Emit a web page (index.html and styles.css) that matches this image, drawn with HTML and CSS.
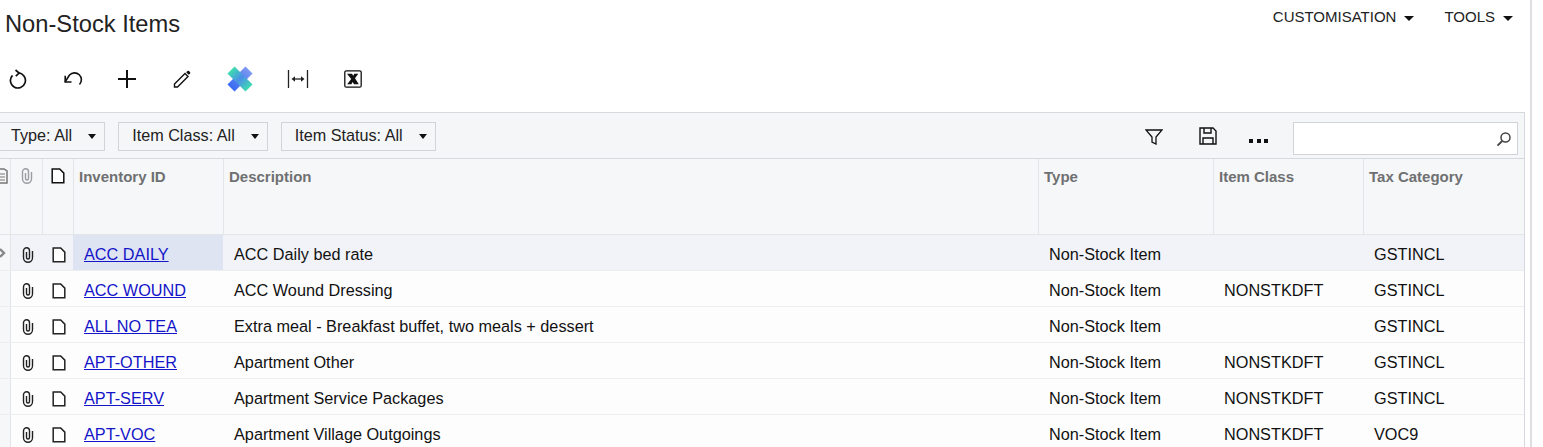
FILE: index.html
```html
<!DOCTYPE html>
<html lang="en">
<head>
    <meta charset="UTF-8">
    <meta name="viewport" content="width=device-width, initial-scale=1.0">
    <title>Non-Stock Items</title>
    <link rel="stylesheet" href="styles.css">
</head>
<body>
    <svg class="defs" width="0" height="0">
        <symbol id="clip" viewBox="0 0 12 16">
            <path d="M10.500 4V10.800a4.500 4.500 0 0 1-9 0V3.800a3 3 0 0 1 6 0V10.500a1.500 1.500 0 0 1-3 0V5" fill="none" stroke="currentColor" stroke-width="1.400"/>
        </symbol>
        <symbol id="doc" viewBox="0 0 14 16">
            <path d="M1.200 1h7.500l4.100 4.100V14.800H1.200z" fill="#fff" stroke="currentColor" stroke-width="1.500"/>
        </symbol>
    </svg>
    <div class="page">
        <div class="top">
            <h1>Non-Stock Items</h1>
            <div class="top-menu">
                <span class="menu-item">CUSTOMISATION<i class="caret"></i></span>
                <span class="menu-item">TOOLS<i class="caret"></i></span>
            </div>
        </div>
        <div class="actions">
            <button class="icon-btn"><svg width="20" height="20" viewBox="0 0 20 20"><path d="M10.500 4a7.500 7.500 0 1 1-6 2.300" fill="none" stroke="#111" stroke-width="1.700"/><path d="M7.500 1l3.600 3-3.300 3.200" fill="none" stroke="#111" stroke-width="1.700"/></svg></button>
            <button class="icon-btn"><svg width="20" height="20" viewBox="0 0 20 20"><path d="M2 13l4.500-7a6.800 6.800 0 0 1 10 9.500" fill="none" stroke="#111" stroke-width="1.600"/><path d="M2.200 6.800V13H8.500" fill="none" stroke="#111" stroke-width="1.600"/></svg></button>
            <button class="icon-btn"><svg width="20" height="20" viewBox="0 0 20 20"><path d="M10 1v18M1 10h18" stroke="#111" stroke-width="2"/></svg></button>
            <button class="icon-btn"><svg width="20" height="20" viewBox="0 0 20 20"><path d="M2.500 15L13 4.500l3 3L5.500 18h-3z" fill="#fff" stroke="#111" stroke-width="1.400"/><path d="M14.200 3.300l1.300-1.300a1 1 0 0 1 1.400 0l1.100 1.100a1 1 0 0 1 0 1.400l-1.300 1.300z" fill="#111"/></svg></button>
            <button class="icon-btn logo-btn"><svg width="26" height="26" viewBox="0 0 26 26"><defs><linearGradient id="bandA" gradientUnits="userSpaceOnUse" x1="4" y1="4" x2="22" y2="22"><stop offset="0" stop-color="#3ddfae"/><stop offset=".5" stop-color="#4a8fe8"/><stop offset="1" stop-color="#3fdcb0"/></linearGradient><linearGradient id="bandB" gradientUnits="userSpaceOnUse" x1="4" y1="22" x2="22" y2="4"><stop offset="0" stop-color="#3a6af2"/><stop offset="1" stop-color="#7c98f0"/></linearGradient></defs><path d="M22 4L4 22" stroke="url(#bandB)" stroke-width="10"/><path d="M4 4l18 18" stroke="url(#bandA)" stroke-width="10"/></svg></button>
            <button class="icon-btn"><svg width="22" height="20" viewBox="0 0 22 20"><path d="M1.500 1v18M20.500 1v18" stroke="#222" stroke-width="1.300"/><path d="M6 10h10" stroke="#222" stroke-width="1.300"/><path d="M4.500 10L8 7.300v5.400zM17.500 10L14 7.300v5.400z" fill="#222"/></svg></button>
            <button class="icon-btn"><svg width="18" height="18" viewBox="0 0 18 18"><rect x=".8" y=".8" width="16.400" height="16.400" rx="1.500" fill="#fff" stroke="#111" stroke-width="1.300"/><path d="M3 3.800h5l1.200 1.900 1.100-1.900h4l-3.300 4.500 3.800 5.900H10L8.700 12l-1.300 2.200H3.200l4-5.200z" fill="#111"/></svg></button>
        </div>
        <div class="panel">
            <div class="filters">
                <div class="pill pill-first">Type: All<i class="caret"></i></div>
                <div class="pill">Item Class: All<i class="caret"></i></div>
                <div class="pill">Item Status: All<i class="caret"></i></div>
                <div class="filter-tools">
                    <svg class="tool-filter" width="18" height="16" viewBox="0 0 18 16"><path d="M1 1h16l-6 7v7l-4-2V8z" fill="none" stroke="#111" stroke-width="1.300"/></svg>
                    <svg class="tool-save" width="18" height="18" viewBox="0 0 18 18"><path d="M1 1h13l3 3v13H1z" fill="none" stroke="#111" stroke-width="1.400"/><path d="M5 1v5h7V1M4 17v-6h10v6" fill="none" stroke="#111" stroke-width="1.400"/></svg>
                    <span class="tool-more"><i></i><i></i><i></i></span>
                    <div class="search">
                        <svg width="16" height="16" viewBox="0 0 16 16"><circle cx="9.500" cy="6.500" r="4.500" fill="none" stroke="#444" stroke-width="1.500"/><path d="M6.200 10L1.500 14.700" stroke="#444" stroke-width="1.800"/></svg>
                    </div>
                </div>
            </div>
            <table class="grid">
                <colgroup>
                    <col class="c-mark"><col class="c-clip"><col class="c-doc"><col class="c-id"><col class="c-desc"><col class="c-type"><col class="c-class"><col>
                </colgroup>
                <thead>
                    <tr>
                        <th class="head-icon"><svg class="head-mark" width="9" height="16" viewBox="0 0 9 16"><path d="M0 1h5l3 2v12H0z" fill="none" stroke="#777" stroke-width="1.500"/><path d="M0 6h6M0 9h6M0 12h6" stroke="#777" stroke-width="1.200"/></svg></th>
                        <th class="head-icon head-clip"><svg width="12" height="16"><use href="#clip"/></svg></th>
                        <th class="head-icon head-doc"><svg width="14" height="16"><use href="#doc"/></svg></th>
                        <th>Inventory ID</th>
                        <th>Description</th>
                        <th>Type</th>
                        <th>Item Class</th>
                        <th>Tax Category</th>
                    </tr>
                </thead>
                <tbody>
                    <tr class="current">
                        <td class="mark"><svg width="6" height="10" viewBox="0 0 6 10"><path d="M0 1l4 4-4 4" fill="none" stroke="#888" stroke-width="2.400"/></svg></td>
                        <td class="icon"><svg width="12" height="16"><use href="#clip"/></svg></td>
                        <td class="icon"><svg width="14" height="16"><use href="#doc"/></svg></td>
                        <td class="id"><a href="#">ACC DAILY</a></td>
                        <td>ACC Daily bed rate</td>
                        <td>Non-Stock Item</td>
                        <td></td>
                        <td>GSTINCL</td>
                    </tr>
                    <tr>
                        <td class="mark"></td>
                        <td class="icon"><svg width="12" height="16"><use href="#clip"/></svg></td>
                        <td class="icon"><svg width="14" height="16"><use href="#doc"/></svg></td>
                        <td class="id"><a href="#">ACC WOUND</a></td>
                        <td>ACC Wound Dressing</td>
                        <td>Non-Stock Item</td>
                        <td>NONSTKDFT</td>
                        <td>GSTINCL</td>
                    </tr>
                    <tr>
                        <td class="mark"></td>
                        <td class="icon"><svg width="12" height="16"><use href="#clip"/></svg></td>
                        <td class="icon"><svg width="14" height="16"><use href="#doc"/></svg></td>
                        <td class="id"><a href="#">ALL NO TEA</a></td>
                        <td>Extra meal - Breakfast buffet, two meals + dessert</td>
                        <td>Non-Stock Item</td>
                        <td></td>
                        <td>GSTINCL</td>
                    </tr>
                    <tr>
                        <td class="mark"></td>
                        <td class="icon"><svg width="12" height="16"><use href="#clip"/></svg></td>
                        <td class="icon"><svg width="14" height="16"><use href="#doc"/></svg></td>
                        <td class="id"><a href="#">APT-OTHER</a></td>
                        <td>Apartment Other</td>
                        <td>Non-Stock Item</td>
                        <td>NONSTKDFT</td>
                        <td>GSTINCL</td>
                    </tr>
                    <tr>
                        <td class="mark"></td>
                        <td class="icon"><svg width="12" height="16"><use href="#clip"/></svg></td>
                        <td class="icon"><svg width="14" height="16"><use href="#doc"/></svg></td>
                        <td class="id"><a href="#">APT-SERV</a></td>
                        <td>Apartment Service Packages</td>
                        <td>Non-Stock Item</td>
                        <td>NONSTKDFT</td>
                        <td>GSTINCL</td>
                    </tr>
                    <tr>
                        <td class="mark"></td>
                        <td class="icon"><svg width="12" height="16"><use href="#clip"/></svg></td>
                        <td class="icon"><svg width="14" height="16"><use href="#doc"/></svg></td>
                        <td class="id"><a href="#">APT-VOC</a></td>
                        <td>Apartment Village Outgoings</td>
                        <td>Non-Stock Item</td>
                        <td>NONSTKDFT</td>
                        <td>VOC9</td>
                    </tr>
                </tbody>
            </table>
        </div>
    </div>
</body>
</html>
```

FILE: styles.css
```css
html, body {
    height: 100%;
}
body {
    font-family: "Liberation Sans", Arial, sans-serif;
    margin: 0;
    padding: 0;
    background-color: #fff;
    color: #111;
    overflow: hidden;
}
.defs {
    display: block;
    height: 0;
}
.page {
    width: 1530px;
    height: 100%;
    border-right: 2px solid #dcdee2;
    overflow: hidden;
}
.top {
    display: flex;
    justify-content: space-between;
    align-items: flex-start;
    height: 61px;
}
h1 {
    font-size: 23.7px;
    font-weight: 400;
    line-height: 28px;
    margin: 10px 0 0 5px;
    color: #222;
}
.top-menu {
    display: flex;
    gap: 30px;
    padding: 8px 17px 0 0;
}
.menu-item {
    font-size: 15px;
    line-height: 17px;
    color: #222;
}
.caret {
    display: inline-block;
    width: 0;
    height: 0;
    margin-left: 8px;
    vertical-align: middle;
    border-left: 5px solid transparent;
    border-right: 5px solid transparent;
    border-top: 5px solid #111;
}
.actions {
    display: flex;
    align-items: center;
    gap: 18.5px;
    height: 36px;
}
.icon-btn {
    display: flex;
    align-items: center;
    justify-content: center;
    width: 36px;
    height: 36px;
    padding: 0;
    border: none;
    background: none;
}
.logo-btn {
    margin: 0 3.5px 0 4px;
}
.panel {
    width: 1525px;
    margin-top: 15px;
    border: 1px solid #d5d8dc;
    border-left: none;
    box-sizing: border-box;
}
.filters {
    display: flex;
    align-items: flex-start;
    gap: 13px;
    height: 46px;
    padding-top: 9px;
    box-sizing: border-box;
    background-color: #f5f6f8;
    border-bottom: 1px solid #d5d8dc;
}
.pill {
    display: flex;
    align-items: center;
    height: 29px;
    padding: 0 8px 2px 13px;
    box-sizing: border-box;
    border: 1px solid #d0d3d8;
    font-size: 16.2px;
    color: #222;
}
.pill-first {
    margin-left: -3px;
}
.pill .caret {
    margin: 2px 0 0 16px;
    border-left-width: 4.5px;
    border-right-width: 4.5px;
}
.filter-tools {
    display: flex;
    align-items: flex-start;
    margin-left: auto;
    margin-right: 6px;
}
.tool-filter {
    margin-top: 7px;
}
.tool-save {
    margin: 5px 0 0 36px;
}
.tool-more {
    display: flex;
    gap: 3.5px;
    margin: 17px 0 0 32px;
}
.tool-more i {
    width: 4px;
    height: 4px;
    background-color: #111;
}
.search {
    display: flex;
    align-items: center;
    justify-content: flex-end;
    width: 225px;
    height: 33px;
    margin-left: 25px;
    padding-right: 5px;
    box-sizing: border-box;
    background-color: #fff;
    border: 1px solid #d0d3d8;
}
.grid {
    width: 100%;
    table-layout: fixed;
    border-collapse: collapse;
}
.c-mark { width: 10px; }
.c-clip { width: 32px; }
.c-doc { width: 31px; }
.c-id { width: 150px; }
.c-desc { width: 815px; }
.c-type { width: 175px; }
.c-class { width: 150px; }
th {
    height: 75px;
    padding: 10px 5px 0 5.5px;
    box-sizing: border-box;
    vertical-align: top;
    text-align: left;
    font-size: 15px;
    line-height: 16px;
    color: #6f7071;
    background-color: #f6f7f9;
    border-right: 1px solid #e3e5e8;
    border-bottom: 1px solid #e3e5e8;
}
th:last-child, td:last-child {
    border-right: none;
}
.head-icon {
    padding: 9px 0 0;
    overflow: hidden;
}
.head-icon svg {
    display: block;
}
.head-mark {
    margin-left: -1px;
}
.head-clip {
    color: #9a9da1;
}
.head-clip svg {
    margin-left: 10px;
}
.head-doc {
    color: #111;
}
.head-doc svg {
    margin-left: 8px;
}
td {
    height: 36px;
    padding: 5px 10px 0 11px;
    box-sizing: border-box;
    font-size: 16.25px;
    color: #111;
    white-space: nowrap;
    background-color: #fdfdfe;
    border-bottom: 1px solid #eceef0;
}
td.mark {
    padding: 0;
    background-color: #f6f7f9;
    border-right: 1px solid #e3e5e8;
}
td.mark svg {
    display: block;
    margin-top: 2px;
}
td.icon {
    padding: 5px 0 0 3px;
    color: #222;
}
td.icon svg {
    display: block;
    margin: 0 auto;
}
.current td {
    background-color: #f1f3f8;
}
.current td.mark {
    background-color: #f6f7f9;
}
.current td.id {
    background-color: #dfe4f3;
}
.id a {
    color: #1414c8;
}
```
